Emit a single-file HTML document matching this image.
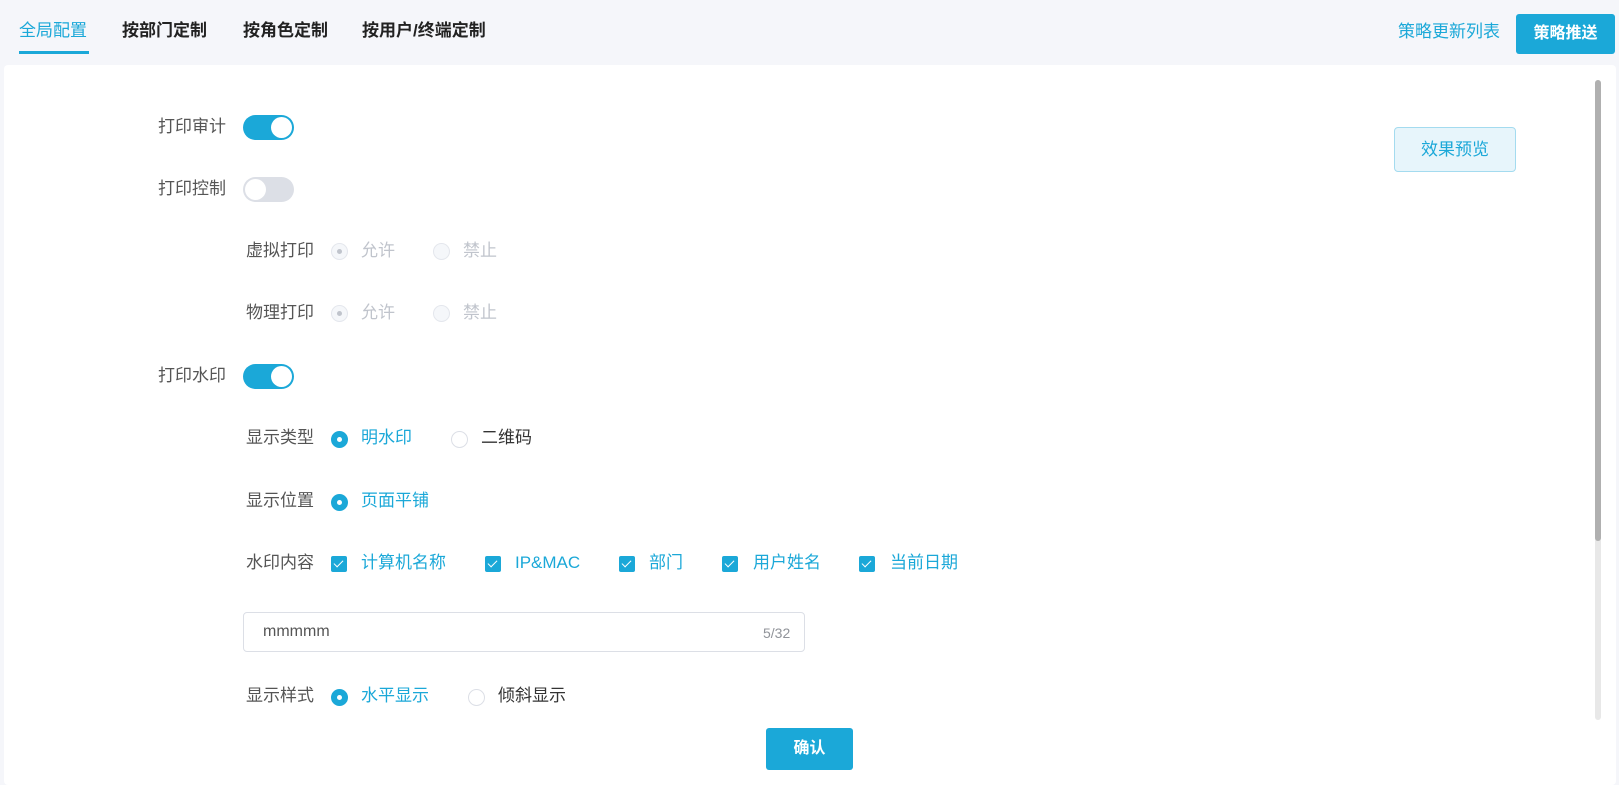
<!DOCTYPE html>
<html><head><meta charset="utf-8"><style>
*{margin:0;padding:0;box-sizing:border-box}
body{width:1619px;height:785px;background:#f5f6fa;font-family:"Liberation Sans","Noto Sans CJK SC",sans-serif;position:relative;overflow:hidden;color:#333}
.a{position:absolute;white-space:nowrap;line-height:20px}
.tab{font-size:17px;top:21px;color:#222;font-weight:bold}
.panel{position:absolute;left:4px;top:65px;width:1612px;height:720px;background:#fff;border-radius:4px}
.lbl{font-size:17px;color:#555}
.sw{position:absolute;width:51px;height:25px;border-radius:13px;background:#1ba8d8}
.sw::after{content:"";position:absolute;top:2px;left:28px;width:21px;height:21px;border-radius:50%;background:#fff}
.sw.off{background:#dcdfe6}
.sw.off::after{left:2px}
.r{position:absolute;width:17px;height:17px;border-radius:50%;border:1px solid #dcdfe6;background:#fff}
.r.on{background:#1ba8d8;border-color:#1ba8d8}
.r.on::after{content:"";position:absolute;left:5px;top:5px;width:5px;height:5px;border-radius:50%;background:#fff}
.r.dis{background:#f5f7fa;border-color:#e4e7ed}
.r.dis.sel::after{content:"";position:absolute;left:5px;top:5px;width:5px;height:5px;border-radius:50%;background:#c0c4cc}
.t{font-size:17px}
.blue{color:#1ba8d8}
.gray{color:#c0c4cc}
.cb{position:absolute;width:16px;height:16px;border-radius:2px;background:#1ba8d8}
.cb::after{content:"";position:absolute;left:5px;top:2px;width:4px;height:8px;border:solid #fff;border-width:0 1.5px 1.5px 0;transform:rotate(45deg)}
</style></head><body>
<div class="a tab blue" style="left:19px;font-weight:normal">全局配置</div>
<div style="position:absolute;left:19px;top:51px;width:70px;height:3px;background:#1ba8d8"></div>
<div class="a tab" style="left:122px">按部门定制</div>
<div class="a tab" style="left:243px">按角色定制</div>
<div class="a tab" style="left:362px">按用户/终端定制</div>
<div class="a blue" style="left:1398px;top:22px;font-size:17px">策略更新列表</div>
<div style="position:absolute;left:1516px;top:14px;width:99px;height:40px;background:#1ba8d8;border-radius:3px;color:#fff;font-size:16px;font-weight:bold;text-align:center;line-height:40px">策略推送</div>
<div class="panel"></div>
<div style="position:absolute;left:1394px;top:127px;width:122px;height:45px;background:#e7f5fb;border:1px solid #a4dbef;border-radius:4px;color:#1ba8d8;font-size:17px;text-align:center;line-height:43px">效果预览</div>
<div style="position:absolute;left:1595px;top:80px;width:6px;height:640px;background:#e8e8e8;border-radius:3px"></div>
<div style="position:absolute;left:1595px;top:80px;width:6px;height:461px;background:#b0b0b0;border-radius:3px"></div>

<div class="a lbl" style="left:158px;top:117px">打印审计</div><div class="sw" style="left:243px;top:115px"></div>
<div class="a lbl" style="left:158px;top:179px">打印控制</div><div class="sw off" style="left:243px;top:177px"></div>

<div class="a lbl" style="left:246px;top:241px">虚拟打印</div>
<div class="r dis sel" style="left:331px;top:243px"></div><div class="a t gray" style="left:361px;top:241px">允许</div>
<div class="r dis" style="left:433px;top:243px"></div><div class="a t gray" style="left:463px;top:241px">禁止</div>
<div class="a lbl" style="left:246px;top:303px">物理打印</div>
<div class="r dis sel" style="left:331px;top:305px"></div><div class="a t gray" style="left:361px;top:303px">允许</div>
<div class="r dis" style="left:433px;top:305px"></div><div class="a t gray" style="left:463px;top:303px">禁止</div>

<div class="a lbl" style="left:158px;top:366px">打印水印</div><div class="sw" style="left:243px;top:364px"></div>

<div class="a lbl" style="left:246px;top:428px">显示类型</div>
<div class="r on" style="left:331px;top:431px"></div><div class="a t blue" style="left:361px;top:428px">明水印</div>
<div class="r" style="left:451px;top:431px"></div><div class="a t" style="left:481px;top:428px">二维码</div>

<div class="a lbl" style="left:246px;top:491px">显示位置</div>
<div class="r on" style="left:331px;top:494px"></div><div class="a t blue" style="left:361px;top:491px">页面平铺</div>

<div class="a lbl" style="left:246px;top:553px">水印内容</div>
<div class="cb" style="left:331px;top:556px"></div><div class="a t blue" style="left:361px;top:553px">计算机名称</div>
<div class="cb" style="left:485px;top:556px"></div><div class="a t blue" style="left:515px;top:553px">IP&amp;MAC</div>
<div class="cb" style="left:619px;top:556px"></div><div class="a t blue" style="left:649px;top:553px">部门</div>
<div class="cb" style="left:722px;top:556px"></div><div class="a t blue" style="left:753px;top:553px">用户姓名</div>
<div class="cb" style="left:859px;top:556px"></div><div class="a t blue" style="left:890px;top:553px">当前日期</div>

<div style="position:absolute;left:243px;top:612px;width:562px;height:40px;border:1px solid #dcdfe6;border-radius:4px"></div>
<div class="a" style="left:263px;top:622px;font-size:16px;color:#555">mmmmm</div>
<div class="a" style="left:763px;top:623px;font-size:14px;color:#909399">5/32</div>

<div class="a lbl" style="left:246px;top:686px">显示样式</div>
<div class="r on" style="left:331px;top:689px"></div><div class="a t blue" style="left:361px;top:686px">水平显示</div>
<div class="r" style="left:468px;top:689px"></div><div class="a t" style="left:498px;top:686px">倾斜显示</div>

<div style="position:absolute;left:766px;top:728px;width:87px;height:42px;background:#1ba8d8;border-radius:3px;color:#fff;font-size:16px;font-weight:bold;text-align:center;line-height:42px">确认</div>
</body></html>
